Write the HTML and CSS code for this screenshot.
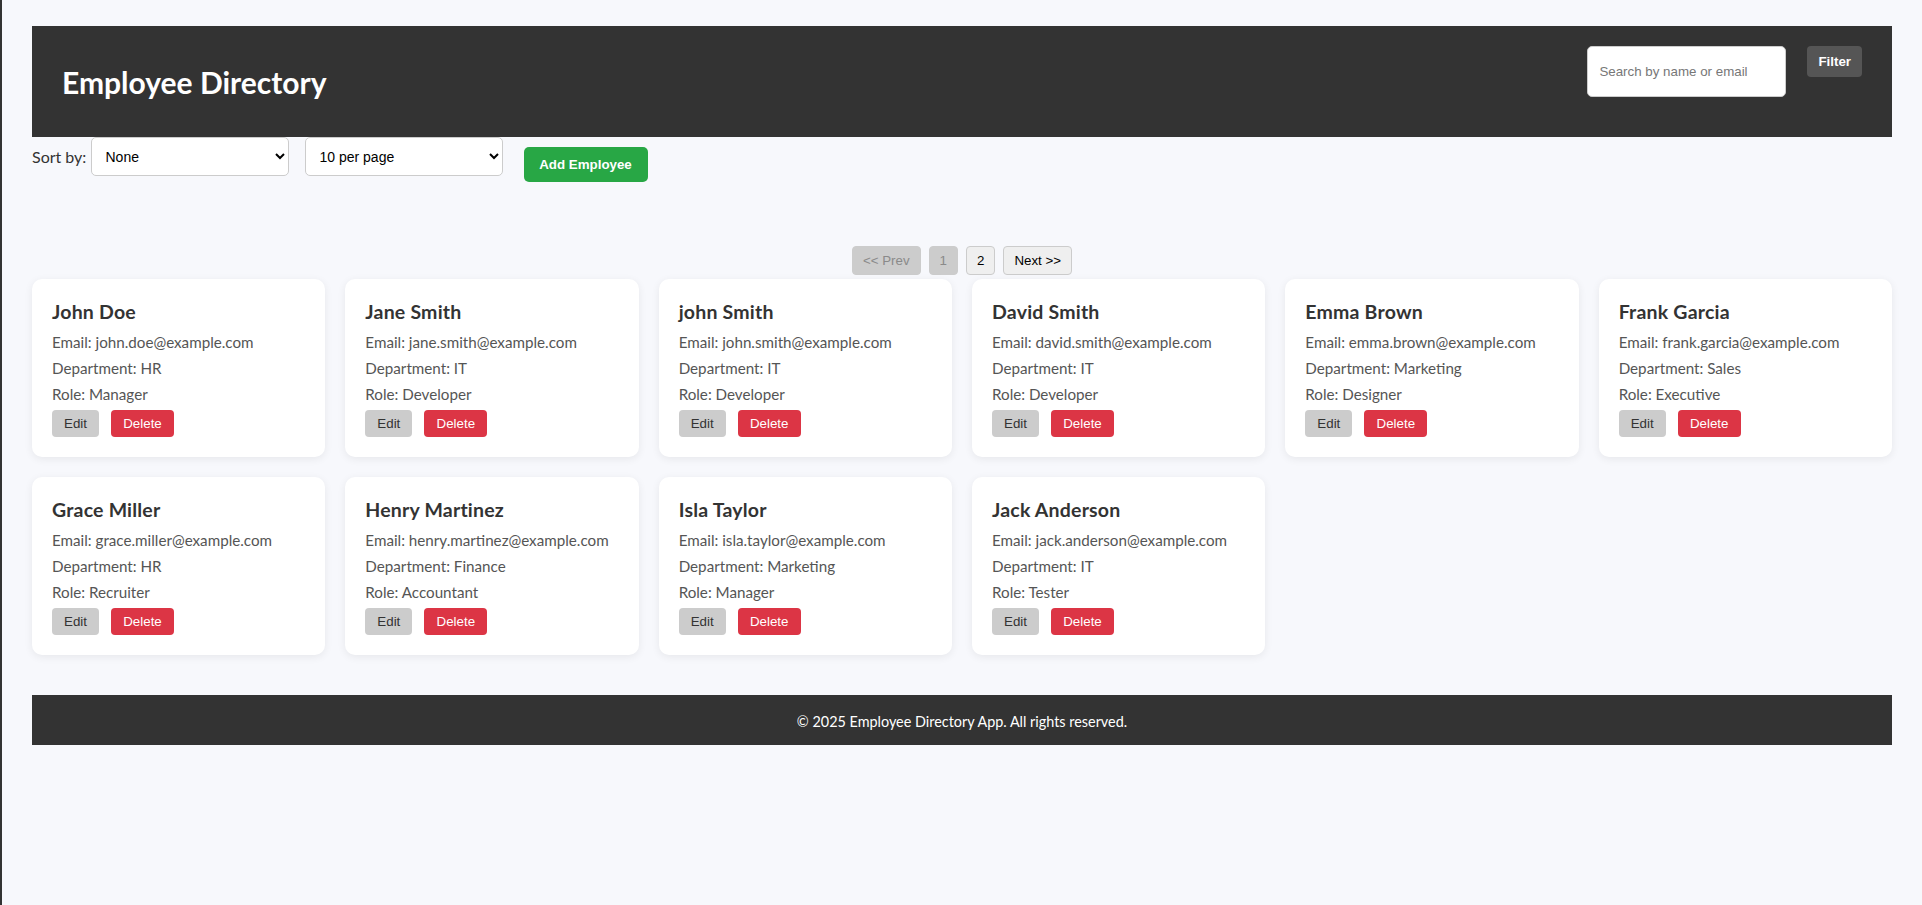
FILE: index.html
```html
<!DOCTYPE html>
<html lang="en">
<head>
<meta charset="utf-8">
<title>Employee Directory</title>
<link rel="stylesheet" href="styles.css">
</head>
<body>
<div class="page">
  <header class="app-header">
    <h1 class="app-title">Employee Directory</h1>
    <form class="search">
      <input class="search-input" type="text" placeholder="Search by name or email">
      <button type="button" class="btn btn-filter">Filter</button>
    </form>
  </header>

  <div class="controls">
    <label class="sort-label">Sort by:</label>
    <select class="select"><option>None</option></select>
    <select class="select select-gap"><option>10 per page</option></select>
    <button type="button" class="btn btn-add">Add Employee</button>
  </div>

  <nav class="pagination">
    <button type="button" class="btn page-btn is-disabled">&lt;&lt; Prev</button>
    <button type="button" class="btn page-btn is-disabled">1</button>
    <button type="button" class="btn page-btn">2</button>
    <button type="button" class="btn page-btn">Next &gt;&gt;</button>
  </nav>

  <main class="grid">
    <div class="card">
      <h3 class="card-name">John Doe</h3>
      <p class="card-line">Email: john.doe@example.com</p>
      <p class="card-line">Department: HR</p>
      <p class="card-line">Role: Manager</p>
      <div class="card-actions"><button type="button" class="btn btn-edit">Edit</button><button type="button" class="btn btn-delete">Delete</button></div>
    </div>
    <div class="card">
      <h3 class="card-name">Jane Smith</h3>
      <p class="card-line">Email: jane.smith@example.com</p>
      <p class="card-line">Department: IT</p>
      <p class="card-line">Role: Developer</p>
      <div class="card-actions"><button type="button" class="btn btn-edit">Edit</button><button type="button" class="btn btn-delete">Delete</button></div>
    </div>
    <div class="card">
      <h3 class="card-name">john Smith</h3>
      <p class="card-line">Email: john.smith@example.com</p>
      <p class="card-line">Department: IT</p>
      <p class="card-line">Role: Developer</p>
      <div class="card-actions"><button type="button" class="btn btn-edit">Edit</button><button type="button" class="btn btn-delete">Delete</button></div>
    </div>
    <div class="card">
      <h3 class="card-name">David Smith</h3>
      <p class="card-line">Email: david.smith@example.com</p>
      <p class="card-line">Department: IT</p>
      <p class="card-line">Role: Developer</p>
      <div class="card-actions"><button type="button" class="btn btn-edit">Edit</button><button type="button" class="btn btn-delete">Delete</button></div>
    </div>
    <div class="card">
      <h3 class="card-name">Emma Brown</h3>
      <p class="card-line">Email: emma.brown@example.com</p>
      <p class="card-line">Department: Marketing</p>
      <p class="card-line">Role: Designer</p>
      <div class="card-actions"><button type="button" class="btn btn-edit">Edit</button><button type="button" class="btn btn-delete">Delete</button></div>
    </div>
    <div class="card">
      <h3 class="card-name">Frank Garcia</h3>
      <p class="card-line">Email: frank.garcia@example.com</p>
      <p class="card-line">Department: Sales</p>
      <p class="card-line">Role: Executive</p>
      <div class="card-actions"><button type="button" class="btn btn-edit">Edit</button><button type="button" class="btn btn-delete">Delete</button></div>
    </div>
    <div class="card">
      <h3 class="card-name">Grace Miller</h3>
      <p class="card-line">Email: grace.miller@example.com</p>
      <p class="card-line">Department: HR</p>
      <p class="card-line">Role: Recruiter</p>
      <div class="card-actions"><button type="button" class="btn btn-edit">Edit</button><button type="button" class="btn btn-delete">Delete</button></div>
    </div>
    <div class="card">
      <h3 class="card-name">Henry Martinez</h3>
      <p class="card-line">Email: henry.martinez@example.com</p>
      <p class="card-line">Department: Finance</p>
      <p class="card-line">Role: Accountant</p>
      <div class="card-actions"><button type="button" class="btn btn-edit">Edit</button><button type="button" class="btn btn-delete">Delete</button></div>
    </div>
    <div class="card">
      <h3 class="card-name">Isla Taylor</h3>
      <p class="card-line">Email: isla.taylor@example.com</p>
      <p class="card-line">Department: Marketing</p>
      <p class="card-line">Role: Manager</p>
      <div class="card-actions"><button type="button" class="btn btn-edit">Edit</button><button type="button" class="btn btn-delete">Delete</button></div>
    </div>
    <div class="card">
      <h3 class="card-name">Jack Anderson</h3>
      <p class="card-line">Email: jack.anderson@example.com</p>
      <p class="card-line">Department: IT</p>
      <p class="card-line">Role: Tester</p>
      <div class="card-actions"><button type="button" class="btn btn-edit">Edit</button><button type="button" class="btn btn-delete">Delete</button></div>
    </div>
  </main>

  <footer class="app-footer">
    <p class="footer-text">© 2025 Employee Directory App. All rights reserved.</p>
  </footer>
</div>
</body>
</html>
```

FILE: styles.css
```css
* { box-sizing: border-box; }

html, body {
  margin: 0;
  padding: 0;
}

body {
  background: #f7f8fc;
  font-family: "Lato", "Open Sans", sans-serif;
  color: #333;
  min-height: 100vh;
  border-left: 2px solid #333;
}

.page {
  padding: 26px 30px 0 30px;
}

.app-header {
  background: #333;
  height: 111px;
  padding: 20px 30px;
  display: flex;
  justify-content: space-between;
  align-items: center;
}

.app-title {
  margin: 0;
  color: #fff;
  font-size: 30px;
  font-weight: 700;
  line-height: 40px;
  margin-top: 1px;
}

.search {
  align-self: flex-start;
  display: flex;
  align-items: flex-start;
  gap: 21px;
  margin: 0;
}

.search-input {
  width: 199px;
  height: 51px;
  padding: 0 11px;
  border: 1px solid #ccc;
  border-radius: 5px;
  font-family: "Liberation Sans", Arial, sans-serif;
  font-size: 13.33px;
  background: #fff;
  color: #333;
}

.search-input::placeholder { color: #777; }

.btn {
  font-family: "Liberation Sans", Arial, sans-serif;
  font-size: 13.33px;
  line-height: 15px;
  border: none;
  cursor: pointer;
}

.btn-filter {
  background: #555;
  color: #fff;
  font-weight: 700;
  padding: 8px 11px;
  height: 31px;
  border-radius: 4px;
}

.controls {
  display: flex;
  align-items: flex-start;
  height: 45px;
}

.sort-label {
  align-self: center;
  margin-top: -6px;
  font-size: 16px;
  color: #333;
  width: 58.5px;
}

.select {
  width: 198px;
  height: 39px;
  padding: 0 10px;
  border: 1px solid #ccc;
  border-radius: 5px;
  background: #fff;
  font-family: "Liberation Sans", Arial, sans-serif;
  font-size: 14px;
  color: #000;
}

.select-gap { margin-left: 16px; }

.btn-add {
  margin-top: 10px;
  margin-left: 21px;
  width: 124px;
  height: 35px;
  padding: 10px 0;
  background: #28a745;
  color: #fff;
  font-weight: 700;
  border-radius: 5px;
}

.pagination {
  margin-top: 64px;
  display: flex;
  justify-content: center;
  gap: 8px;
}

.page-btn {
  height: 29px;
  padding: 6px 10px;
  border: 1px solid #ccc;
  border-radius: 4px;
  background: #efefef;
  color: #000;
}

.page-btn.is-disabled {
  background: #ccc;
  color: #8a8a8a;
  cursor: default;
}

.grid {
  margin-top: 4px;
  display: grid;
  grid-template-columns: repeat(6, 1fr);
  gap: 20px;
}

.card {
  background: #fff;
  border-radius: 10px;
  padding: 20px;
  height: 178px;
  box-shadow: 0 2px 8px rgba(0, 0, 0, 0.07);
}

.card-name {
  margin: 1px 0 5px 0;
  font-size: 19.5px;
  letter-spacing: 0.2px;
  line-height: 24px;
  font-weight: 700;
  color: #333;
}

.card-line {
  margin: 0;
  font-size: 15.2px;
  line-height: 26px;
  color: #555;
}

.card-actions {
  margin-top: 3px;
  display: flex;
  gap: 12px;
}

.btn-edit {
  height: 27px;
  width: 47px;
  padding: 6px 0;
  background: #ccc;
  color: #333;
  border-radius: 4px;
}

.btn-delete {
  height: 27px;
  width: 63px;
  padding: 6px 0;
  background: #dc3545;
  color: #fff;
  border-radius: 4px;
}

.app-footer {
  margin-top: 40px;
  background: #333;
  height: 50px;
  display: flex;
  align-items: center;
  justify-content: center;
}

.footer-text {
  margin: 0;
  color: #fff;
  font-size: 14.4px;
  margin-top: 2px;
}
```
